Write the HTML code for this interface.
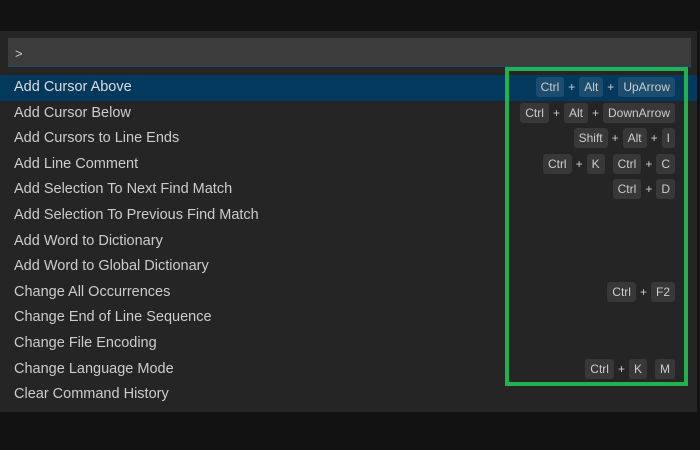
<!DOCTYPE html>
<html><head><style>
*{margin:0;padding:0;box-sizing:border-box}
body{width:700px;height:450px;background:#121212;position:relative;overflow:hidden;font-family:"Liberation Sans",sans-serif}
.panel{position:absolute;left:0;top:31px;width:697px;height:381px;background:#252526}
.input{position:absolute;left:8px;top:38px;width:683px;height:29px;background:#3c3c3c;border-bottom:1px solid #1f4a6e;color:#ccc;font-size:13px;padding:8px 0 0 7px}
.row{position:absolute;left:0;width:697px;height:25.6px;color:#ccc;font-size:14.5px;line-height:25px;padding-left:14px}
.sel{background:#04395e;color:#ddd}
.keys{position:absolute;right:22px;top:2px;display:flex;align-items:center;font-size:12px;color:#ccc;line-height:20px;height:20px}
.k{background:#383838;border-radius:3px;padding:0 5px;height:20px;line-height:20px}
.sel .k{background:#1c4d6e}
.p{margin:0 4px;font-size:12px}
.sp{width:8px}
.box{position:absolute;left:505px;top:67px;width:183px;height:319px;border:4px solid #22b14c}
</style></head><body>
<div class="panel"></div>
<div class="input">&gt;</div>
<div class="row sel" style="top:75px">Add Cursor Above<div class="keys"><span class="k">Ctrl</span><span class="p">+</span><span class="k">Alt</span><span class="p">+</span><span class="k">UpArrow</span></div></div>
<div class="row" style="top:100.6px">Add Cursor Below<div class="keys"><span class="k">Ctrl</span><span class="p">+</span><span class="k">Alt</span><span class="p">+</span><span class="k">DownArrow</span></div></div>
<div class="row" style="top:126.2px">Add Cursors to Line Ends<div class="keys"><span class="k">Shift</span><span class="p">+</span><span class="k">Alt</span><span class="p">+</span><span class="k">I</span></div></div>
<div class="row" style="top:151.8px">Add Line Comment<div class="keys"><span class="k">Ctrl</span><span class="p">+</span><span class="k">K</span><span class="sp"></span><span class="k">Ctrl</span><span class="p">+</span><span class="k">C</span></div></div>
<div class="row" style="top:177.4px">Add Selection To Next Find Match<div class="keys"><span class="k">Ctrl</span><span class="p">+</span><span class="k">D</span></div></div>
<div class="row" style="top:203px">Add Selection To Previous Find Match</div>
<div class="row" style="top:228.6px">Add Word to Dictionary</div>
<div class="row" style="top:254.2px">Add Word to Global Dictionary</div>
<div class="row" style="top:279.8px">Change All Occurrences<div class="keys"><span class="k">Ctrl</span><span class="p">+</span><span class="k">F2</span></div></div>
<div class="row" style="top:305.4px">Change End of Line Sequence</div>
<div class="row" style="top:331px">Change File Encoding</div>
<div class="row" style="top:356.6px">Change Language Mode<div class="keys"><span class="k">Ctrl</span><span class="p">+</span><span class="k">K</span><span class="sp"></span><span class="k">M</span></div></div>
<div class="row" style="top:382.2px">Clear Command History</div>
<div class="box"></div>
</body></html>
